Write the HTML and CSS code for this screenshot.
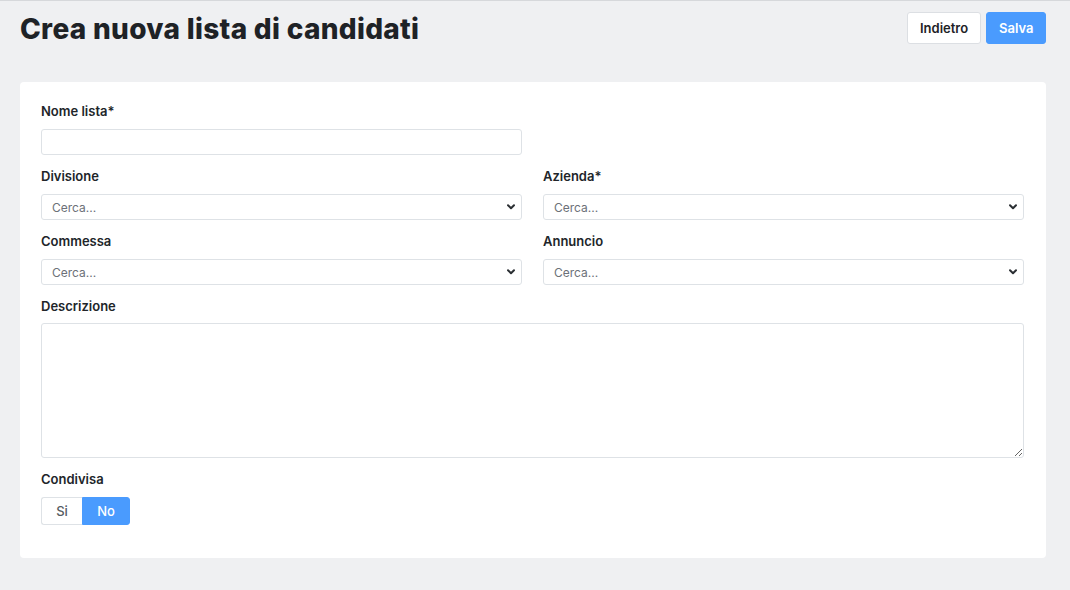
FILE: index.html
```html
<!DOCTYPE html>
<html lang="it">
<head>
<meta charset="utf-8">
<title>Crea nuova lista di candidati</title>
<link rel="stylesheet" href="styles.css">
</head>
<body>
<div class="page">
  <header class="header">
    <h1 class="title">Crea nuova lista di candidati</h1>
    <div class="actions">
      <button class="btn btn-light" type="button">Indietro</button>
      <button class="btn btn-primary" type="button">Salva</button>
    </div>
  </header>

  <form class="card">
    <div class="grid">
      <div class="field">
        <label class="label">Nome lista*</label>
        <input class="input" type="text">
      </div>
      <div class="field"></div>

      <div class="field">
        <label class="label">Divisione</label>
        <div class="select"><span class="placeholder">Cerca...</span>
          <svg class="chev" width="8" height="6" viewBox="0 0 8 6"><path d="M1 1.2 L4 4.2 L7 1.2" fill="none" stroke="#2b2f33" stroke-width="2" stroke-linecap="round" stroke-linejoin="round"/></svg>
        </div>
      </div>
      <div class="field">
        <label class="label">Azienda*</label>
        <div class="select"><span class="placeholder">Cerca...</span>
          <svg class="chev" width="8" height="6" viewBox="0 0 8 6"><path d="M1 1.2 L4 4.2 L7 1.2" fill="none" stroke="#2b2f33" stroke-width="2" stroke-linecap="round" stroke-linejoin="round"/></svg>
        </div>
      </div>

      <div class="field">
        <label class="label">Commessa</label>
        <div class="select"><span class="placeholder">Cerca...</span>
          <svg class="chev" width="8" height="6" viewBox="0 0 8 6"><path d="M1 1.2 L4 4.2 L7 1.2" fill="none" stroke="#2b2f33" stroke-width="2" stroke-linecap="round" stroke-linejoin="round"/></svg>
        </div>
      </div>
      <div class="field">
        <label class="label">Annuncio</label>
        <div class="select"><span class="placeholder">Cerca...</span>
          <svg class="chev" width="8" height="6" viewBox="0 0 8 6"><path d="M1 1.2 L4 4.2 L7 1.2" fill="none" stroke="#2b2f33" stroke-width="2" stroke-linecap="round" stroke-linejoin="round"/></svg>
        </div>
      </div>

      <div class="field span2">
        <label class="label label-tight">Descrizione</label>
        <textarea class="textarea"></textarea>
      </div>

      <div class="field span2">
        <label class="label">Condivisa</label>
        <div class="toggle">
          <button class="tg tg-off" type="button">Si</button>
          <button class="tg tg-on" type="button">No</button>
        </div>
      </div>
    </div>
  </form>
</div>
</body>
</html>
```

FILE: styles.css
```css
* { box-sizing: border-box; }
html, body { margin: 0; padding: 0; }
body {
  background: #eff0f2;
  border-top: 1px solid #d6d8db;
  font-family: "Inter", "Open Sans", sans-serif;
  color: #212529;
  height: 590px;
  overflow: hidden;
}
.page {
  padding: 0 24px 0 20px;
}
.header {
  display: flex;
  justify-content: space-between;
  align-items: flex-start;
  padding-top: 11px;
}
.title {
  margin: 0;
  font-size: 28px;
  line-height: 34px;
  font-weight: 800;
  color: #1e2226;
  letter-spacing: 0.3px;
}
.actions {
  display: flex;
  gap: 5px;
}
.btn {
  height: 32px;
  border-radius: 3px;
  font-family: inherit;
  font-size: 13px;
  font-weight: 600;
  padding: 0 12px;
  cursor: pointer;
}
.btn-light {
  background: #fff;
  border: 1px solid #dcdfe3;
  color: #1e2226;
  width: 74px;
}
.btn-primary {
  background: #4a9bfe;
  border: 1px solid #4a9bfe;
  color: #fff;
  width: 60px;
}
.card {
  display: block;
  margin-top: 36px;
  background: #fff;
  border-radius: 4px;
  padding: 19px 22px 33px 21px;
}
.grid {
  display: grid;
  grid-template-columns: 1fr 1fr;
  column-gap: 21px;
  row-gap: 11px;
}
.span2 { grid-column: 1 / span 2; }
.field {
  display: flex;
  flex-direction: column;
}
.label {
  font-size: 13px;
  line-height: 20px;
  font-weight: 600;
  color: #212529;
  margin-bottom: 8px;
}
.label-tight { margin-bottom: 7px; }
.input, .select {
  height: 26px;
  border: 1px solid #dee2e6;
  border-radius: 3px;
  background: #fff;
}
.select {
  display: flex;
  align-items: center;
  justify-content: space-between;
  padding: 0 6px 0 10px;
}
.placeholder {
  font-size: 12px;
  color: #6c7178;
}
.chev { display: block; }
.textarea {
  height: 135px;
  border: 1px solid #dee2e6;
  border-radius: 3px;
  resize: vertical;
  font-family: inherit;
}
.toggle {
  display: flex;
}
.tg {
  height: 28px;
  font-family: inherit;
  font-size: 13px;
  font-weight: 500;
  padding: 0;
  cursor: pointer;
}
.tg-off {
  width: 41px;
  background: #fff;
  color: #555b61;
  border: 1px solid #dee2e6;
  border-right: none;
  border-radius: 3px 0 0 3px;
}
.tg-on {
  width: 48px;
  background: #4a9bfe;
  color: #fff;
  border: 1px solid #4a9bfe;
  border-radius: 0 3px 3px 0;
}
```
